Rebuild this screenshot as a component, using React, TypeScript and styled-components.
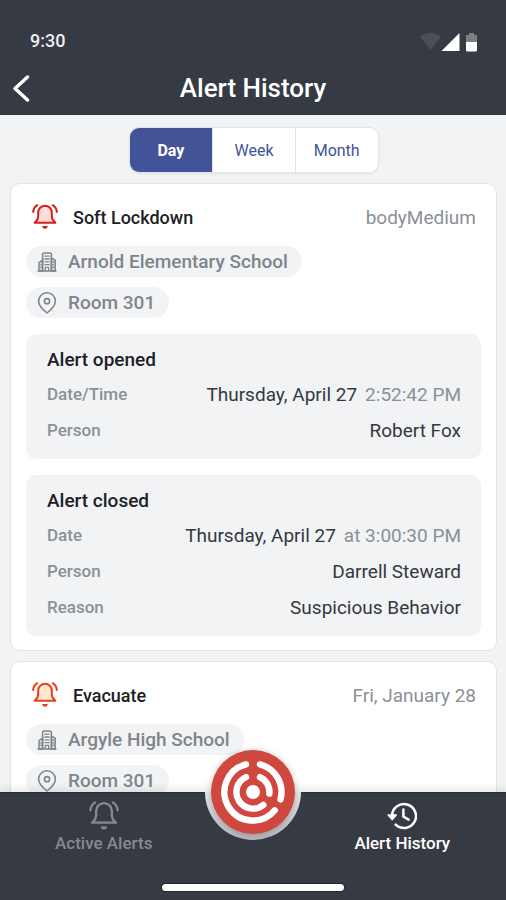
import React, { useState } from "react";
import styled, { createGlobalStyle } from "styled-components";

const color = {
  dark: "#363a42",
  page: "#f1f3f5",
  panel: "#f1f3f5",
  line: "#e2e4e8",
  indigo: "#435398",
  ink: "#1d2025",
  text: "#35383e",
  muted: "#8a9097",
  chip: "#7f858b",
  navMuted: "#858a91",
  red: "#d0473f",
};

const GlobalStyle = createGlobalStyle`
  *, *::before, *::after { box-sizing: border-box; }
  body {
    margin: 0;
    background: ${color.page};
    font-family: Roboto, "Liberation Sans", sans-serif;
    color: ${color.ink};
  }
  button { font: inherit; color: inherit; cursor: pointer; }
`;

const Screen = styled.div`
  display: flex;
  flex-direction: column;
  height: 100vh;
  overflow: hidden;
`;

const Header = styled.header`
  flex: none;
  padding: 28px 28px 9px 12px;
  background: ${color.dark};
  color: #fff;
`;

const StatusBar = styled.div`
  display: flex;
  align-items: center;
  justify-content: space-between;
  height: 24px;
  padding-left: 18px;
  font-size: 18px;
  font-weight: 500;
  color: #eceef0;
`;

const StatusIcons = styled.div`
  display: flex;
  align-items: center;
  padding-top: 4px;
`;

const TitleBar = styled.div`
  display: grid;
  grid-template-columns: 20px 1fr 4px;
  align-items: center;
  height: 36px;
  margin-top: 18px;
`;

const BackButton = styled.button`
  display: flex;
  padding: 0;
  border: 0;
  background: none;
`;

const Title = styled.h1`
  margin: 0;
  text-align: center;
  font-size: 26px;
  line-height: 36px;
  font-weight: 500;
`;

const Content = styled.main`
  flex: 1;
  min-height: 0;
  overflow-y: auto;
  scrollbar-width: none;
  padding: 12px 9px 64px 10px;
`;

const Segments = styled.div`
  display: grid;
  grid-template-columns: repeat(3, 1fr);
  width: 250px;
  height: 46px;
  margin: 0 auto 10px;
  border: 1px solid ${color.line};
  border-radius: 10px;
  background: #fff;
  overflow: hidden;
  box-shadow: 0 1px 2px rgba(40, 45, 60, 0.08);
`;

const Segment = styled.button<{ $active: boolean }>`
  border: 0;
  padding: 0;
  font-size: 16px;
  font-weight: ${(p) => (p.$active ? 700 : 400)};
  background: ${(p) => (p.$active ? color.indigo : "#fff")};
  color: ${(p) => (p.$active ? "#fff" : color.indigo)};

  & + & {
    border-left: 1px solid ${color.line};
  }
`;

const Card = styled.article`
  margin-bottom: 10px;
  padding: 17px 15px 14px;
  border: 1px solid ${color.line};
  border-radius: 10px;
  background: #fff;
`;

const CardHeader = styled.header`
  display: flex;
  align-items: center;
  gap: 15px;
  height: 32px;
  margin-bottom: 13px;
  padding: 0 5px 0 6px;
`;

const CardTitle = styled.h2`
  flex: 1;
  margin: 0;
  font-size: 18px;
  font-weight: 500;
`;

const CardDate = styled.span`
  font-size: 19px;
  color: ${color.muted};
`;

const Chips = styled.div`
  display: flex;
  flex-direction: column;
  align-items: flex-start;
  gap: 10px;
`;

const Chip = styled.span`
  display: flex;
  align-items: center;
  gap: 11px;
  height: 31px;
  padding: 0 14px 0 11px;
  border-radius: 16px;
  background: ${color.panel};
  color: ${color.chip};
  font-size: 19px;
  font-weight: 500;
`;

const Panel = styled.section`
  margin-top: 16px;
  padding: 14px 20px 19px 21px;
  border-radius: 10px;
  background: ${color.panel};
`;

const PanelTitle = styled.h3`
  margin: 0 0 12px;
  font-size: 19px;
  line-height: 24px;
  font-weight: 500;
`;

const Details = styled.dl`
  display: flex;
  flex-direction: column;
  gap: 16px;
  margin: 0;
`;

const Detail = styled.div`
  display: flex;
  align-items: center;
  justify-content: space-between;
  height: 20px;
`;

const Label = styled.dt`
  font-size: 17px;
  font-weight: 500;
  color: ${color.muted};
`;

const Value = styled.dd`
  display: flex;
  gap: 8px;
  margin: 0;
  font-size: 19px;
  color: ${color.text};
`;

const Time = styled.span`
  color: ${color.muted};
`;

const BottomBar = styled.footer`
  position: relative;
  flex: none;
  padding: 8px 0 9px;
  background: ${color.dark};
  border-top: 1px solid #262e37;
  box-shadow: 0 -3px 8px rgba(54, 58, 66, 0.12);
`;

const NavLinks = styled.nav`
  display: grid;
  grid-template-columns: 41% 1fr 41%;
`;

const NavLink = styled.a<{ $active?: boolean; $end?: boolean }>`
  grid-column: ${(p) => (p.$end ? 3 : 1)};
  display: flex;
  flex-direction: column;
  align-items: center;
  gap: 2px;
  font-size: 17px;
  line-height: 20px;
  font-weight: 500;
  text-decoration: none;
  color: ${(p) => (p.$active ? "#fff" : color.navMuted)};
`;

const HomeIndicator = styled.div`
  width: 36%;
  height: 7px;
  margin: 31px auto 0;
  border-radius: 4px;
  background: #fff;
  box-shadow: 0 0 0 1px #23272e;
`;

const Notch = styled.div`
  position: absolute;
  top: -49px;
  left: 50%;
  width: 96px;
  height: 96px;
  padding: 6px;
  margin-left: -48px;
  border-radius: 50%;
  background: linear-gradient(transparent 50%, #e6e8ea 50%, #b4b6b9 100%);
`;

const AlertButton = styled.button`
  display: block;
  width: 84px;
  height: 84px;
  padding: 0;
  border: 0;
  border-radius: 50%;
  background: ${color.red};
  box-shadow: 0 1px 6px rgba(60, 60, 66, 0.35);
`;

const BellIcon = ({ size = 26, fill = "none" }: { size?: number; fill?: string }) => (
  <svg width={size} height={size} viewBox="0 0 26 26" fill="none" stroke="currentColor" strokeWidth="2" strokeLinecap="round" strokeLinejoin="round" aria-hidden="true">
    <path fill={fill} d="M2.6 18.8C5.2 16.8 6.2 15 6.2 12.2V8.6a6.8 6.8 0 0 1 13.6 0v3.6c0 2.8 1 4.6 3.6 6.6Z" />
    <path d="M1.2 8C1.4 5.2 2.8 2.8 5.2 1.2M24.8 8c-.2-2.8-1.6-5.2-4-6.8" />
    <path d="M10.8 22.6h4.4a2.3 2.3 0 0 1-4.4 0Z" fill="currentColor" strokeWidth="1.2" />
  </svg>
);

const BuildingIcon = () => (
  <svg width="20" height="20" viewBox="0 0 20 20" fill="none" stroke="currentColor" strokeWidth="1.5" aria-hidden="true">
    <path fill="#dcdfe2" d="M5.600 8.200 2 10.600V19H5.600ZM14.400 6.200l3.800 1.900V19H14.400Z" />
    <path d="M.5 19h19M5.600 19V1.800L7 .9h6l1.400.9V19" />
    <path d="M7.400 4.200h5.200M7.400 7h5.200M7.400 9.800h5.200M7.400 12.600h5.200M3.400 12.800h1.400M3.400 15.400h1.400M15.400 10h1.600M15.400 12.800h1.600M15.400 15.400h1.600M8.400 19v-3.600h3.200V19" strokeWidth="1.300" />
  </svg>
);

const PinIcon = () => (
  <svg width="20" height="22" viewBox="0 0 20 22" fill="none" stroke="currentColor" strokeWidth="1.6" strokeLinejoin="round" aria-hidden="true">
    <path d="M10 21C7 18.6 1.6 14 1.6 9.2a8.400 8.400 0 0 1 16.800 0C18.400 14 13 18.600 10 21Z" />
    <circle cx="10" cy="9.2" r="2.6" />
  </svg>
);

const HistoryIcon = () => (
  <svg width="30" height="30" viewBox="0 0 30 30" fill="none" stroke="currentColor" strokeWidth="2.5" strokeLinecap="round" strokeLinejoin="round" aria-hidden="true">
    <path d="M5 15a12 12 0 1 1 3.600 8.600" />
    <path d="M1.200 14h8L5.200 18.600Z" fill="currentColor" strokeWidth="1.600" />
    <path d="M16.400 8.600v7l5.200 3" />
  </svg>
);

const LogoIcon = () => (
  <svg width="84" height="84" viewBox="-42 -42 84 84" fill="none" stroke="#fff" strokeWidth="6.4" strokeLinecap="round" aria-hidden="true">
    <circle r="7" fill="#fff" stroke="none" />
    <path d="M-7-14.900A16.500 16.500 0 1 0 10.300 12.900" />
    <path d="M7-14.900A16.500 16.500 0 0 1 16.400 1.600" />
    <path d="M-7-27.600A28.500 28.500 0 1 0 21.800 18.300" />
    <path d="M7-27.600A28.500 28.500 0 0 1 27.500 7.400" />
  </svg>
);

const StatusGlyphs = () => (
  <StatusIcons>
    <svg width="59" height="20" viewBox="0 0 59 20" aria-hidden="true">
      <path d="M1 4.600Q11.500-3 22 4.600L11.500 18Z" fill="#4b4f56" />
      <path d="M22.500 19H40.500V1Z" fill="#fff" />
      <path d="M50 1h5v2h3v8H47V3h3Z" fill="#7c8085" />
      <path d="M47 10h11v8q0 1.500-1.500 1.500h-8Q47 19.500 47 18Z" fill="#fff" />
    </svg>
  </StatusIcons>
);

type Row = { label: string; value: string; time?: string };
type PanelData = { title: string; rows: Row[] };
type Alert = {
  name: string;
  date: string;
  stroke: string;
  fill: string;
  school: string;
  room: string;
  panels: PanelData[];
};

const alerts: Alert[] = [
  {
    name: "Soft Lockdown",
    date: "bodyMedium",
    stroke: "#d3201f",
    fill: "#fbdedb",
    school: "Arnold Elementary School",
    room: "Room 301",
    panels: [
      {
        title: "Alert opened",
        rows: [
          { label: "Date/Time", value: "Thursday, April 27", time: "2:52:42 PM" },
          { label: "Person", value: "Robert Fox" },
        ],
      },
      {
        title: "Alert closed",
        rows: [
          { label: "Date", value: "Thursday, April 27", time: "at 3:00:30 PM" },
          { label: "Person", value: "Darrell Steward" },
          { label: "Reason", value: "Suspicious Behavior" },
        ],
      },
    ],
  },
  {
    name: "Evacuate",
    date: "Fri, January 28",
    stroke: "#e8401c",
    fill: "#ffeacf",
    school: "Argyle High School",
    room: "Room 301",
    panels: [],
  },
];

const BellTint = styled.span<{ $color: string }>`
  display: flex;
  color: ${(p) => p.$color};
`;

const AlertCard = ({ alert }: { alert: Alert }) => (
  <Card>
    <CardHeader>
      <BellTint $color={alert.stroke}>
        <BellIcon fill={alert.fill} />
      </BellTint>
      <CardTitle>{alert.name}</CardTitle>
      <CardDate>{alert.date}</CardDate>
    </CardHeader>
    <Chips>
      <Chip>
        <BuildingIcon />
        {alert.school}
      </Chip>
      <Chip>
        <PinIcon />
        {alert.room}
      </Chip>
    </Chips>
    {alert.panels.map((panel) => (
      <Panel key={panel.title}>
        <PanelTitle>{panel.title}</PanelTitle>
        <Details>
          {panel.rows.map((row) => (
            <Detail key={row.label}>
              <Label>{row.label}</Label>
              <Value>
                {row.value}
                {row.time && <Time>{row.time}</Time>}
              </Value>
            </Detail>
          ))}
        </Details>
      </Panel>
    ))}
  </Card>
);

const ranges = ["Day", "Week", "Month"];

export default function App() {
  const [range, setRange] = useState("Day");

  return (
    <Screen>
      <GlobalStyle />
      <Header>
        <StatusBar>
          <span>9:30</span>
          <StatusGlyphs />
        </StatusBar>
        <TitleBar>
          <BackButton type="button" aria-label="Back">
            <svg width="18" height="28" viewBox="0 0 18 28" fill="none" stroke="#fff" strokeWidth="3.4" strokeLinecap="round" strokeLinejoin="round" aria-hidden="true">
              <path d="M15.500 3 3 14.500 15.500 26" />
            </svg>
          </BackButton>
          <Title>Alert History</Title>
        </TitleBar>
      </Header>
      <Content>
        <Segments role="group" aria-label="Range">
          {ranges.map((name) => (
            <Segment key={name} type="button" $active={name === range} aria-pressed={name === range} onClick={() => setRange(name)}>
              {name}
            </Segment>
          ))}
        </Segments>
        {alerts.map((alert) => (
          <AlertCard key={alert.name} alert={alert} />
        ))}
      </Content>
      <BottomBar>
        <NavLinks aria-label="Main">
          <NavLink href="#active">
            <BellIcon size={30} />
            Active Alerts
          </NavLink>
          <NavLink href="#history" $active $end aria-current="page">
            <HistoryIcon />
            Alert History
          </NavLink>
        </NavLinks>
        <HomeIndicator />
        <Notch>
          <AlertButton type="button" aria-label="Raise an alert">
            <LogoIcon />
          </AlertButton>
        </Notch>
      </BottomBar>
    </Screen>
  );
}
